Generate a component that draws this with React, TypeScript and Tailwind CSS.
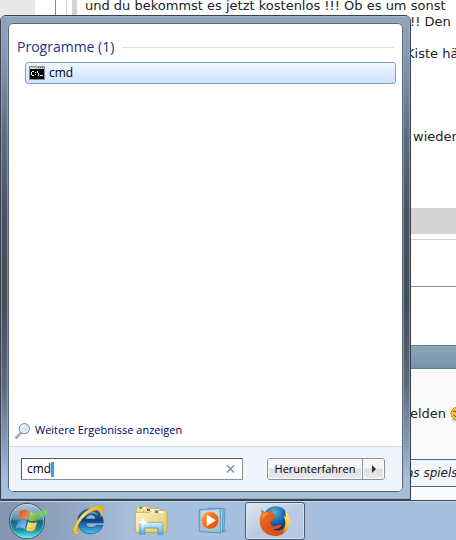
import { useState } from "react";

function ConsoleIcon() {
  return (
    <svg width="16" height="14" viewBox="0 0 16 14" aria-hidden="true">
      <rect width="16" height="14" fill="#8f8f8f" />
      <rect x="1" y="1" width="14" height="2" fill="#c9c9c9" />
      <path d="M9 1h1v1H9zM11 1h1v1h-1zM13 1h1v1h-1z" fill="#555" />
      <rect x="1" y="3" width="14" height="10" fill="#000" />
      <path
        d="M3 5h2v1H3zM2 6h1v3H2zM3 9h2v1H3zM6 6h1v1H6zM6 8h1v1H6zM8 5h1v2H8zM9 7h1v3H9zM11 9h3v1h-3z"
        fill="#fff"
        shapeRendering="crispEdges"
      />
    </svg>
  );
}

function MagnifierIcon() {
  return (
    <svg width="16" height="18" viewBox="0 0 48 54" aria-hidden="true">
      <path d="M4 47 18 32" stroke="#8a8d92" strokeWidth="7" strokeLinecap="round" />
      <path d="M5 45 18 31" stroke="#d5d7da" strokeWidth="3" strokeLinecap="round" />
      <circle cx="28" cy="20" r="15" fill="#dcecf9" stroke="#8f989f" strokeWidth="4" />
      <circle cx="28" cy="20" r="12" fill="#cfe6f8" stroke="#f5f9fc" strokeWidth="2" />
      <path d="M18 20c1-8 9-12 16-8-6 0-12 3-16 8z" fill="#fff" />
    </svg>
  );
}

function StartOrb() {
  return (
    <svg width="44" height="38" viewBox="24 18 132 114" aria-hidden="true">
      <defs>
        <linearGradient id="orb" x1="0" y1="0" x2="0" y2="1">
          <stop offset="0" stopColor="#b9c9d6" />
          <stop offset=".45" stopColor="#5f8da5" />
          <stop offset=".5" stopColor="#1c5f7e" />
          <stop offset=".75" stopColor="#148fa6" />
          <stop offset="1" stopColor="#6ff3ee" />
        </linearGradient>
        <radialGradient id="orbGreen">
          <stop offset="0" stopColor="#6fe04a" stopOpacity=".9" />
          <stop offset="1" stopColor="#6fe04a" stopOpacity="0" />
        </radialGradient>
        <linearGradient id="fRed" x1="0" y1="0" x2="1" y2="1">
          <stop offset="0" stopColor="#d8401c" />
          <stop offset="1" stopColor="#f9a05e" />
        </linearGradient>
        <linearGradient id="fGreen" x1="0" y1="0" x2="1" y2="1">
          <stop offset="0" stopColor="#c4e388" />
          <stop offset="1" stopColor="#4c9f22" />
        </linearGradient>
        <linearGradient id="fBlue" x1="0" y1="0" x2="1" y2="1">
          <stop offset="0" stopColor="#2c79c9" />
          <stop offset="1" stopColor="#9bd3f5" />
        </linearGradient>
        <linearGradient id="fYellow" x1="0" y1="0" x2="1" y2="1">
          <stop offset="0" stopColor="#fff0a0" />
          <stop offset="1" stopColor="#f3b211" />
        </linearGradient>
      </defs>
      <circle cx="81" cy="75" r="53" fill="url(#orb)" stroke="#395a72" strokeWidth="3" />
      <circle cx="81" cy="75" r="50" fill="none" stroke="#cfeaf2" strokeWidth="2" opacity=".7" />
      <ellipse cx="128" cy="52" rx="30" ry="14" transform="rotate(-35 128 52)" fill="url(#orbGreen)" />
      <path d="M61 45c10-5 19-4 26 1l-6 25c-8-5-17-6-27-1z" fill="url(#fRed)" />
      <path d="M91 48c9 5 18 5 28 0l-7 25c-9 4-19 5-27 0z" fill="url(#fGreen)" />
      <path d="M53 74c10-5 19-4 27 1l-6 24c-8-5-17-6-27-1z" fill="url(#fBlue)" />
      <path d="M84 77c8 5 18 5 27 1l-7 25c-9 4-18 4-26-1z" fill="url(#fYellow)" />
    </svg>
  );
}

function ExplorerEIcon() {
  return (
    <svg width="32" height="32" viewBox="0 0 96 96" aria-hidden="true">
      <defs>
        <linearGradient id="ieBlue" x1="0" y1="0" x2="0" y2="1">
          <stop offset="0" stopColor="#1b6bb0" />
          <stop offset=".45" stopColor="#0b3f83" />
          <stop offset="1" stopColor="#42c4f5" />
        </linearGradient>
        <linearGradient id="ieGold" x1="0" y1="1" x2="1" y2="0">
          <stop offset="0" stopColor="#f6c321" />
          <stop offset=".5" stopColor="#ffe368" />
          <stop offset="1" stopColor="#e8ab13" />
        </linearGradient>
      </defs>
      <path
        fillRule="evenodd"
        d="M52 12c24 0 39 16 39 42H38c1 9 7 14 17 14 7 0 12-3 14-7h21C84 77 71 86 53 86 29 86 14 71 14 49c0-22 16-37 38-37zM38 42h30c-1-8-6-13-14-13-9 0-15 5-16 13z"
        fill="url(#ieBlue)"
        stroke="#164e80"
        strokeWidth="2"
      />
      <path d="M21 37c5-12 16-19 29-19 11 0 20 4 26 12-18-8-38-6-55 7z" fill="#9fd0ef" opacity=".55" />
      <path
        d="M81 22c1-9-13-9-27-2C35 30 16 52 12 70c-3 14 6 15 16 10-12 11-28 11-26-7C5 51 31 19 60 6c21-8 34-4 30 15-1 6-4 11-7 15 1-5 0-10-2-14z"
        fill="url(#ieGold)"
        stroke="#c79110"
        strokeWidth="1"
      />
    </svg>
  );
}

function FolderIcon() {
  return (
    <svg width="34" height="32" viewBox="0 0 102 96" aria-hidden="true">
      <defs>
        <linearGradient id="folder" x1="0" y1="0" x2="1" y2="1">
          <stop offset="0" stopColor="#fdf6cf" />
          <stop offset="1" stopColor="#e4c659" />
        </linearGradient>
        <linearGradient id="stand" x1="0" y1="0" x2="0" y2="1">
          <stop offset="0" stopColor="#d5f0fa" />
          <stop offset="1" stopColor="#55acd6" />
        </linearGradient>
      </defs>
      <path d="M7 10l5-6h36l5 8v70H7z" fill="#f3e19b" stroke="#b59a45" strokeWidth="2" />
      <path d="M29 10h48l4 8v64H29z" fill="#f7e9ae" stroke="#b59a45" strokeWidth="2" />
      <path d="M4 22h44l6-6h40l5 8v58H4z" fill="url(#folder)" stroke="#b59a45" strokeWidth="2" />
      <path d="M15 6h20v7H15z" fill="#fff" />
      <path d="M16 6h9v6h-9z" fill="#16b82c" />
      <path d="M38 12h22v6H38z" fill="#fff" />
      <path d="M39 12h9v6h-9z" fill="#cf3a20" />
      <path d="M62 18h25v6H62z" fill="#fff" />
      <path d="M63 18h10v6H63z" fill="#2a8fe0" />
      <path d="M17 88V58l5-6h60l5 6v30H71V69H33v19z" fill="url(#stand)" stroke="#4595bd" strokeWidth="2" />
      <path d="M27 34l3 14 14 4-14 4-3 16-3-16-14-4 14-4z" fill="#fff" opacity=".9" />
      <path d="M15 40l24 24M39 40L15 64" stroke="#fff" strokeWidth="2" opacity=".7" />
    </svg>
  );
}

function MediaPlayerIcon() {
  return (
    <svg width="32" height="28" viewBox="0 0 96 84" aria-hidden="true">
      <defs>
        <linearGradient id="disc" x1="0" y1="0" x2="1" y2="1">
          <stop offset="0" stopColor="#ffb066" />
          <stop offset=".5" stopColor="#f36c17" />
          <stop offset="1" stopColor="#e04a05" />
        </linearGradient>
      </defs>
      <path d="M66 74l28-6-10 9z" fill="#6d8bad" opacity=".5" />
      <path d="M40 5h44l-3 67-41 4z" fill="#82bede" stroke="#4087ae" strokeWidth="2" />
      <path d="M34 4h44l-2 71-42 1z" fill="#a9d7ec" stroke="#4087ae" strokeWidth="2" />
      <path d="M7 8l64-4v73L7 74z" fill="#8dc6e3" stroke="#4087ae" strokeWidth="2" />
      <path d="M12 12l54-4v20C46 20 28 22 12 32z" fill="#c3e4f3" opacity=".8" />
      <circle cx="39" cy="40" r="27" fill="url(#disc)" stroke="#f9d2b0" strokeWidth="2" />
      <path d="M29 23l28 17-28 18z" fill="#fff" />
    </svg>
  );
}

function FirefoxIcon() {
  return (
    <svg width="32" height="32" viewBox="0 0 96 96" aria-hidden="true">
      <defs>
        <radialGradient id="globe" cx=".45" cy=".25" r=".7">
          <stop offset="0" stopColor="#4fb7ea" />
          <stop offset=".55" stopColor="#1769ae" />
          <stop offset="1" stopColor="#0b3070" />
        </radialGradient>
        <linearGradient id="fox" x1="0" y1="0" x2="1" y2="1">
          <stop offset="0" stopColor="#ee7a22" />
          <stop offset=".5" stopColor="#e2541b" />
          <stop offset="1" stopColor="#d8441a" />
        </linearGradient>
        <linearGradient id="tail" x1="0" y1="0" x2="0" y2="1">
          <stop offset="0" stopColor="#fff27a" />
          <stop offset=".6" stopColor="#fdc92b" />
          <stop offset="1" stopColor="#ee7d1e" />
        </linearGradient>
      </defs>
      <circle cx="50" cy="42" r="38" fill="url(#globe)" />
      <path d="M78 16c13 13 17 32 11 48-8 18-24 28-41 28 18-8 29-20 31-36 1-10-1-17-6-24l7 4c0-8 0-14-2-20z" fill="url(#tail)" />
      <path
        d="M7 14c5 1 8 5 11 8 4-2 9-2 13-1 3-4 7-7 12-8-3 4-4 9-2 13l11 3c0 5-4 7-10 10l1 7c-5 0-9 3-9 8 0 7 8 11 17 9 6-2 9-5 15-3 3 2 1 5-3 7-7 5-15 7-23 4 10 9 26 8 37-6 0 8-4 13-8 17 6-2 11-6 16-11C77 85 65 93 48 93 21 93 2 73 2 49c0-8 2-16 6-22-1-4-2-8-1-13z"
        fill="url(#fox)"
      />
      <path d="M8 38c1-7 5-12 10-15 4-1 9 0 12 1-8 3-14 9-15 18-3-1-5-2-7-4z" fill="#f6a03c" opacity=".7" />
    </svg>
  );
}

function Smiley() {
  return (
    <svg width="15" height="16" viewBox="0 0 15 16" className="shrink-0" aria-hidden="true">
      <ellipse cx="8" cy="14" rx="7" ry="2" fill="#cfcfcf" />
      <circle cx="7.500" cy="7.500" r="6.500" fill="#fbc72e" stroke="#cf8f18" />
      <path d="M3 6q1-2 3 0M9 6q2-2 3 0M3.500 9q4 4 8 0" fill="none" stroke="#603c08" />
    </svg>
  );
}

const pinned = [
  { name: "Internet Explorer", icon: <ExplorerEIcon />, running: false },
  { name: "Windows-Explorer", icon: <FolderIcon />, running: false },
  { name: "Windows Media Player", icon: <MediaPlayerIcon />, running: false },
  { name: "Firefox", icon: <FirefoxIcon />, running: true },
];

function ForumPage() {
  return (
    <main className="flex-1 min-h-0 flex flex-col overflow-hidden bg-white text-[13px] leading-4 text-[#222] whitespace-nowrap font-['DejaVu_Sans',sans-serif]">
      <div className="flex h-52 shrink-0">
        <div className="w-[35px] shrink-0 bg-[#e8e8e8]" />
        <div className="ml-5 w-3 shrink-0 border-x border-l-[#6d94ac] border-r-[#d3d3d3]" />
        <div className="ml-[5px] w-[5px] shrink-0 bg-[#d3d3d3]" />
        <div className="flex-1 min-w-0 pl-2">
          <p className="leading-3">und du bekommst es jetzt kostenlos !!! Ob es um sonst</p>
          <p className="pl-[325px] mt-0.5">!! Den</p>
          <p className="pl-[321px] mt-4">Kiste hä</p>
          <p className="pl-[328px] mt-[67px]">wieder</p>
        </div>
      </div>
      <div className="h-[26px] shrink-0 bg-[#d3d3d3]" />
      <div className="mt-[5px] h-12 shrink-0 border-t border-b border-t-[#d3d3d3] border-b-[#6d94ac]" />
      <div className="mt-[58px] h-6 shrink-0 border-y border-[#5c8299] bg-linear-to-b from-[#8ba7b8] to-[#7394a8]" />
      <div className="flex-1 min-h-0 bg-[#fafafa]">
        <p className="flex items-center h-[90px] pl-[410px]">
          elden
          <span className="ml-1"><Smiley /></span>
        </p>
        <p className="flex items-center h-7 pl-[406px] border-y border-[#44708c] bg-[#f1f5f7] text-xs italic">as spiels</p>
      </div>
    </main>
  );
}

function StartMenu() {
  const [query, setQuery] = useState("cmd");

  return (
    <div className="absolute left-0 top-[15px] bottom-10 w-[411px] max-w-full flex rounded-t-md border border-[#37424e] bg-[#a6bfdc] font-['Open_Sans',sans-serif] text-black">
      <div className="flex-1 flex min-w-0 p-[6px] rounded-t-[5px] border border-[#a3b4c8]/60 bg-[linear-gradient(180deg,#8fa5be_0%,#8299b2_8%,#5d6d7f_25%,#46525d_42%,#434f59_60%,#5b6979_76%,#8299b6_88%,#a6bfdc_96%)]">
        <div className="flex-1 min-w-0 flex flex-col overflow-hidden rounded-[5px] border border-[#5a6673] outline outline-[#a3b4c8]/60 bg-white">
          <section className="flex-1 px-2 pt-3">
            <div className="flex items-center gap-2 h-[22px]">
              <h2 className="text-sm text-[#1e3287]">Programme (1)</h2>
              <div className="flex-1 h-px bg-[#e0e0e0]" />
            </div>
            <button className="mt-1 ml-2 w-[371px] max-w-full h-[22px] flex items-center gap-1 px-[3px] rounded-[3px] border border-[#7da2ce] bg-linear-to-b from-[#f0f6fe] to-[#cfe3fd] text-xs">
              <ConsoleIcon />
              cmd
            </button>
          </section>
          <a href="#" className="flex items-center gap-1 h-[31px] px-[6px] text-[11px] text-[#00006b]">
            <MagnifierIcon />
            Weitere Ergebnisse anzeigen
          </a>
          <div className="flex items-center h-[45px] px-3 border-t border-[#cbdaec] bg-[#f0f4fc]">
            <div className="flex items-center w-[222px] h-[22px] pl-[5px] pr-[7px] border border-[#8e8e8e] border-t-[#555] border-l-[#555] rounded-[1px] bg-white">
              <input
                aria-label="Programme und Dateien durchsuchen"
                className="[field-sizing:content] text-xs h-4 outline-none"
                value={query}
                onChange={(e) => setQuery(e.target.value)}
              />
              <span className="w-[3px] h-[15px] bg-[#3399ff]" />
              <button aria-label="Suche löschen" className="ml-auto" onClick={() => setQuery("")}>
                <svg width="9" height="8" viewBox="0 0 9 8">
                  <path d="M1 .5l7 7M8 .5l-7 7" stroke="#6f97b8" strokeWidth="1.500" />
                </svg>
              </button>
            </div>
            <div className="ml-6 flex h-[22px] rounded-[3px] border border-[#8e9095] overflow-hidden bg-linear-to-b from-[#f5f5f6] from-45% via-[#dcdee1] via-50% to-[#e9ebee]">
              <button className="w-[95px] text-[11px] border-r border-[#8e9095] shadow-[inset_0_0_0_1px_#fafafa]">Herunterfahren</button>
              <button aria-label="Weitere Optionen" className="w-[21px] flex items-center justify-center shadow-[inset_0_0_0_1px_#fafafa]">
                <svg width="4" height="8" viewBox="0 0 4 8">
                  <path d="M0 0l4 4-4 4z" fill="#333" />
                </svg>
              </button>
            </div>
          </div>
        </div>
      </div>
    </div>
  );
}

function Taskbar() {
  return (
    <nav className="flex h-10 shrink-0 border-t border-[#3b4552] bg-[linear-gradient(90deg,#8495b1_0px,#8fa2be_60px,#a6bfdc_130px)]">
      <div className="flex-1 flex border-t border-[#c3d3e6]">
        <button aria-label="Start" className="w-[59px] shrink-0 flex items-center pl-2"><StartOrb /></button>
        <div className="flex gap-0.5">
          {pinned.map((app) => (
            <button
              key={app.name}
              aria-label={app.name}
              className={
                app.running
                  ? "w-[60px] flex items-center justify-center rounded-[3px] border border-[#4d5b6d] bg-linear-to-br from-[#dfe8f3] via-[#b9cbe2] to-[#b4c9e2] shadow-[inset_0_0_0_1px_#d8e4f1]"
                  : "w-[60px] flex items-center justify-center"
              }
            >
              {app.icon}
            </button>
          ))}
        </div>
      </div>
    </nav>
  );
}

export default function App() {
  return (
    <div className="relative h-screen flex flex-col overflow-hidden">
      <ForumPage />
      <StartMenu />
      <Taskbar />
    </div>
  );
}
